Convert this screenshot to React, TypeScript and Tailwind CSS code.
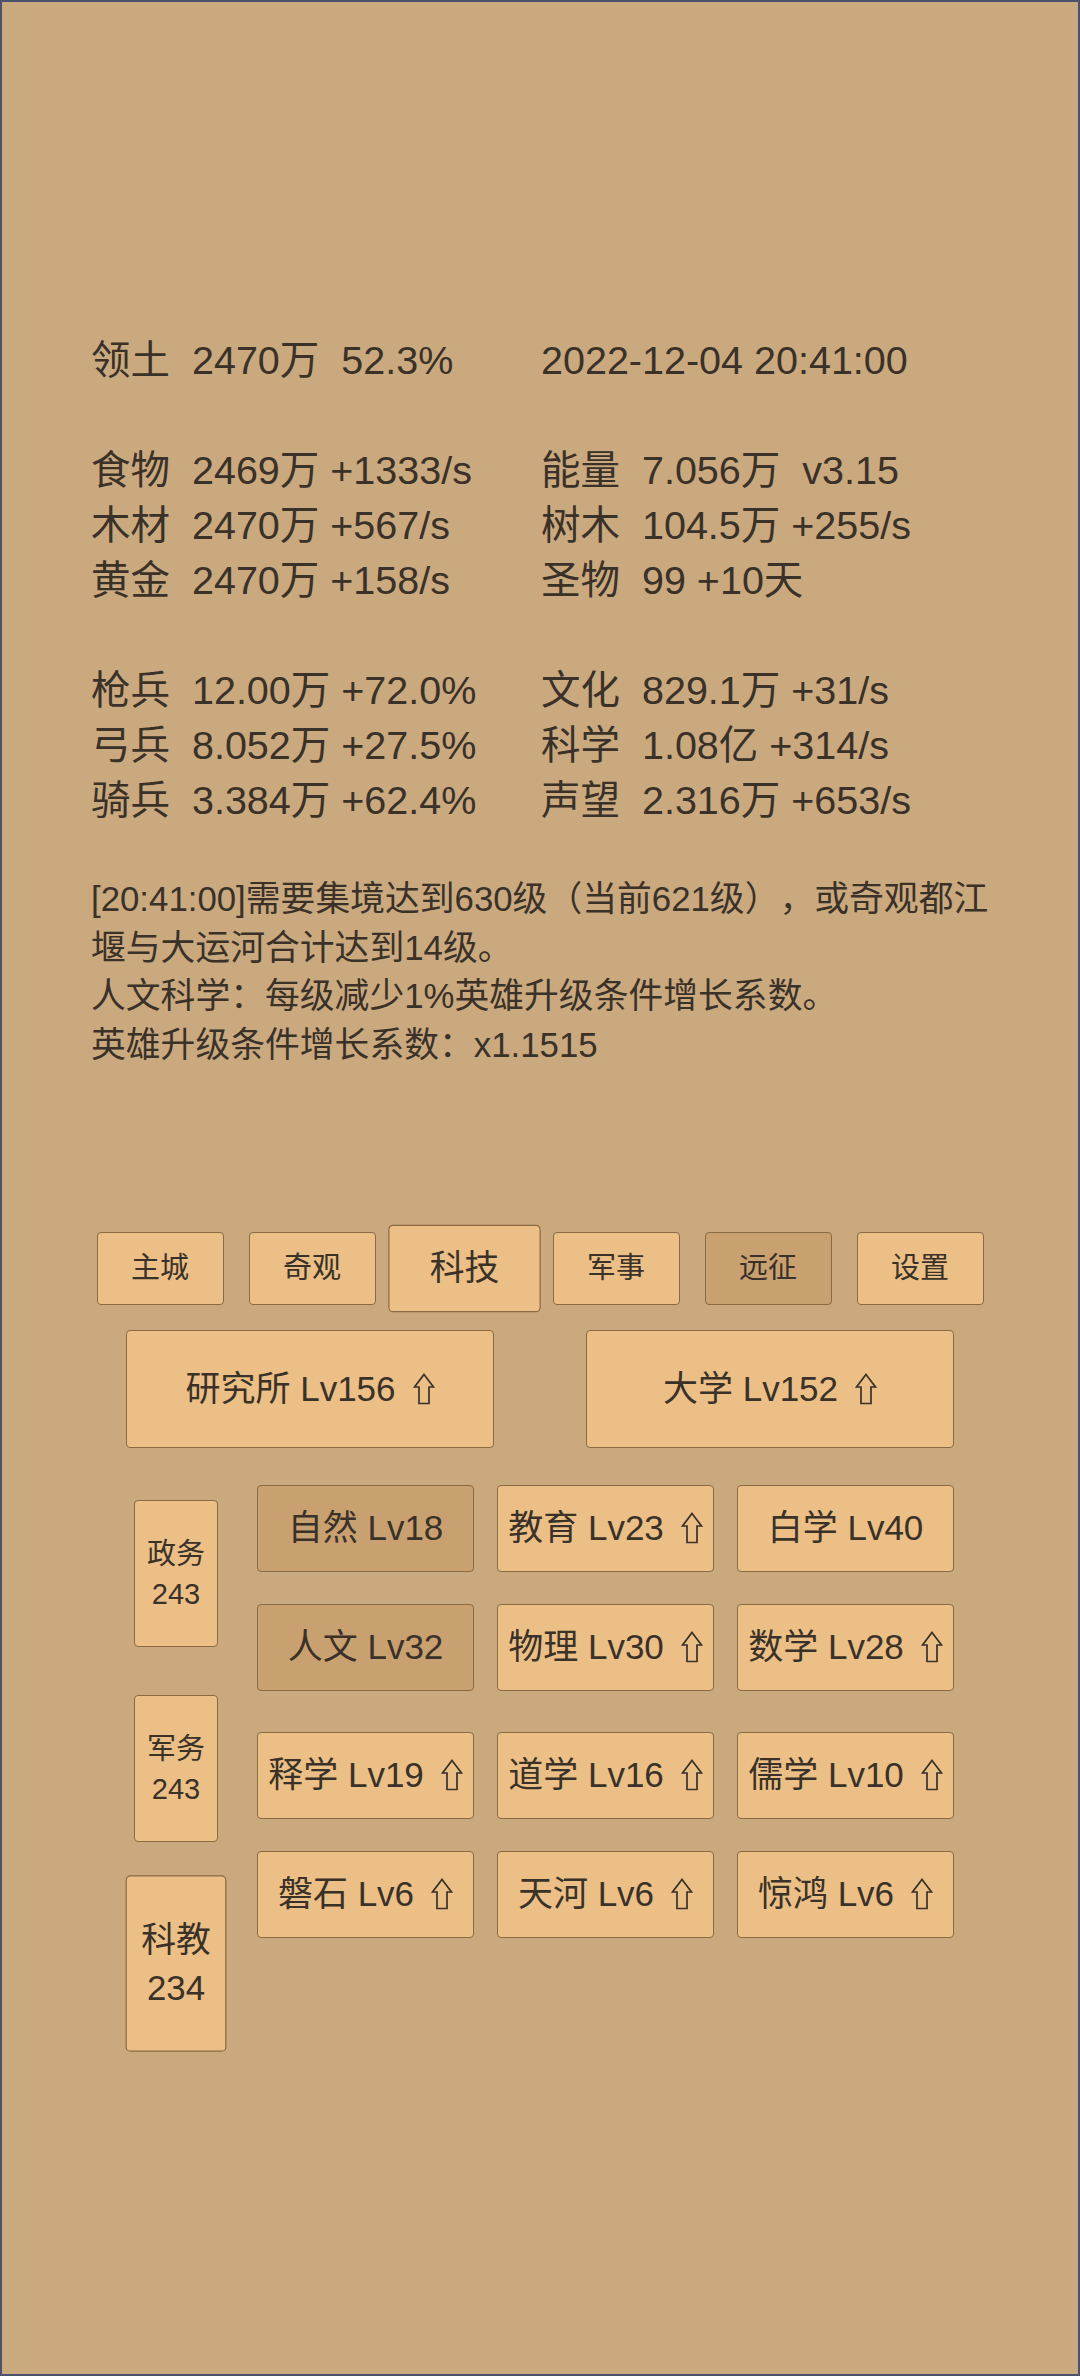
import React from "react"

const font = "font-['Liberation_Sans','Noto_Sans_CJK_SC',sans-serif]"

const statRows: ([string, string] | null)[] = [
  ["领土  2470万  52.3%", "2022-12-04 20:41:00"],
  null,
  ["食物  2469万 +1333/s", "能量  7.056万  v3.15"],
  ["木材  2470万 +567/s", "树木  104.5万 +255/s"],
  ["黄金  2470万 +158/s", "圣物  99 +10天"],
  null,
  ["枪兵  12.00万 +72.0%", "文化  829.1万 +31/s"],
  ["弓兵  8.052万 +27.5%", "科学  1.08亿 +314/s"],
  ["骑兵  3.384万 +62.4%", "声望  2.316万 +653/s"],
]

const tabs = [
  { name: "主城" },
  { name: "奇观" },
  { name: "科技", active: true },
  { name: "军事" },
  { name: "远征", dark: true },
  { name: "设置" },
]

const groups = [
  [
    { name: "自然 Lv18", dark: true },
    { name: "教育 Lv23", up: true },
    { name: "白学 Lv40" },
    { name: "人文 Lv32", dark: true },
    { name: "物理 Lv30", up: true },
    { name: "数学 Lv28", up: true },
  ],
  [
    { name: "释学 Lv19", up: true },
    { name: "道学 Lv16", up: true },
    { name: "儒学 Lv10", up: true },
    { name: "磐石 Lv6", up: true },
    { name: "天河 Lv6", up: true },
    { name: "惊鸿 Lv6", up: true },
  ],
]

function Arrow() {
  return (
    <svg
      viewBox="0 0 22 32"
      className="ml-[17px] inline-block h-[32px] w-[22px] align-[-4px]"
      fill="none"
      stroke="currentColor"
      strokeWidth="1.7"
    >
      <path d="M11 1.5 L20.5 14 H16 V30.5 H6 V14 H1.5 Z" />
    </svg>
  )
}

const btn = "flex items-center justify-center rounded-[4px] border-[1.5px] border-[#8a6a42]"

export default function App() {
  return (
    <div className={`${font} h-[2376px] w-[1080px] overflow-hidden border-2 border-[#4d5170] bg-[#caa97f] text-[#3a3128]`}>
      <div className="px-[89px] pt-[331px]">
        <div className="grid grid-cols-[450px_1fr] text-[39.5px] leading-[55px]">
          {statRows.map((row, i) =>
            row ? (
              <React.Fragment key={i}>
                <div className="whitespace-pre">{row[0]}</div>
                <div className="whitespace-pre">{row[1]}</div>
              </React.Fragment>
            ) : (
              <div key={i} className="col-span-2 h-[55px]" />
            )
          )}
        </div>

        <div className="mt-[47px] w-[905px] text-[34.8px] leading-[48.5px] [text-spacing-trim:space-all]">
          <p>[20:41:00]需要集境达到630级（当前621级），或奇观都江堰与大运河合计达到14级。</p>
          <p>人文科学：每级减少1%英雄升级条件增长系数。</p>
          <p>英雄升级条件增长系数：x1.1515</p>
        </div>
      </div>

      <div className="mt-[163px] flex justify-center gap-[25px]">
        {tabs.map((t) => (
          <div
            key={t.name}
            className={`${btn} h-[73px] w-[127px] text-[29px] ${t.dark ? "bg-[#c9a06f]" : "bg-[#ebbf85]"} ${t.active ? "scale-[1.2]" : ""}`}
          >
            {t.name}
          </div>
        ))}
      </div>

      <div className="mt-[25px] flex justify-center gap-[92px]">
        <div className={`${btn} h-[118px] w-[368px] bg-[#ebbf85] text-[35px]`}>
          <span className="whitespace-pre">
            研究所 Lv156
            <Arrow />
          </span>
        </div>
        <div className={`${btn} h-[118px] w-[368px] bg-[#ebbf85] text-[35px]`}>
          <span className="whitespace-pre">
            大学 Lv152
            <Arrow />
          </span>
        </div>
      </div>

      <div className="flex items-start pl-[132px]">
        <div className="mt-[52px] flex w-[84px] flex-col gap-[48px]">
          <div className={`${btn} h-[147px] flex-col bg-[#ebbf85] text-[29px] leading-[40px]`}>
            <span>政务</span>
            <span>243</span>
          </div>
          <div className={`${btn} h-[147px] flex-col bg-[#ebbf85] text-[29px] leading-[40px]`}>
            <span>军务</span>
            <span>243</span>
          </div>
          <div className={`${btn} h-[147px] scale-[1.2] flex-col bg-[#ebbf85] text-[29px] leading-[40px]`}>
            <span>科教</span>
            <span>234</span>
          </div>
        </div>

        <div className="ml-[39px] mt-[37px] flex flex-col gap-[41px]">
          {groups.map((g, gi) => (
            <div key={gi} className="grid grid-cols-[217px_217px_217px] gap-x-[23px] gap-y-[32px]">
              {g.map((b) => (
                <div
                  key={b.name}
                  className={`${btn} h-[87px] text-[35px] ${b.dark ? "bg-[#c9a06f]" : "bg-[#ebbf85]"}`}
                >
                  <span className="whitespace-pre">
                    {b.name}
                    {b.up && <Arrow />}
                  </span>
                </div>
              ))}
            </div>
          ))}
        </div>
      </div>
    </div>
  )
}
